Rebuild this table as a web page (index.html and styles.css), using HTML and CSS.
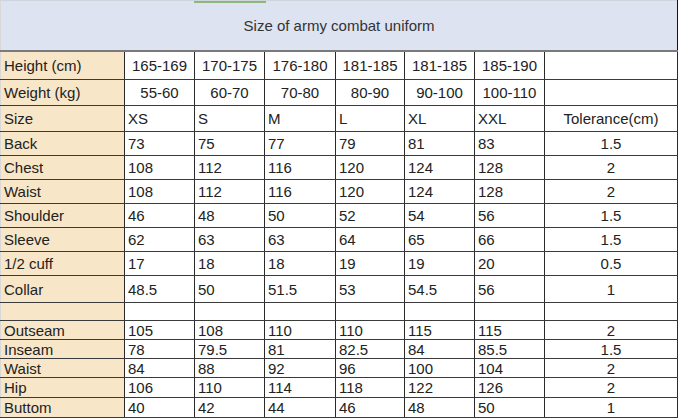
FILE: index.html
```html
<!DOCTYPE html>
<html>
<head>
<meta charset="utf-8">
<link rel="stylesheet" href="styles.css">
</head>
<body>
<table class="chart">
  <colgroup>
    <col class="c-label">
    <col class="c-70">
    <col class="c-70">
    <col class="c-71">
    <col class="c-69">
    <col class="c-70">
    <col class="c-70">
    <col class="c-tol">
  </colgroup>
  <tr class="r-title">
    <td colspan="8" class="title"><span class="tab-mark"></span>Size of army combat uniform</td>
  </tr>
  <tr class="r-28 center">
    <td class="label">Height (cm)</td><td>165-169</td><td>170-175</td><td>176-180</td><td>181-185</td><td>181-185</td><td>185-190</td><td></td>
  </tr>
  <tr class="r-26 center">
    <td class="label">Weight (kg)</td><td>55-60</td><td>60-70</td><td>70-80</td><td>80-90</td><td>90-100</td><td>100-110</td><td></td>
  </tr>
  <tr class="r-26">
    <td class="label">Size</td><td>XS</td><td>S</td><td>M</td><td>L</td><td>XL</td><td>XXL</td><td class="tol">Tolerance(cm)</td>
  </tr>
  <tr class="r-24">
    <td class="label">Back</td><td>73</td><td>75</td><td>77</td><td>79</td><td>81</td><td>83</td><td class="tol">1.5</td>
  </tr>
  <tr class="r-24">
    <td class="label">Chest</td><td>108</td><td>112</td><td>116</td><td>120</td><td>124</td><td>128</td><td class="tol">2</td>
  </tr>
  <tr class="r-24">
    <td class="label">Waist</td><td>108</td><td>112</td><td>116</td><td>120</td><td>124</td><td>128</td><td class="tol">2</td>
  </tr>
  <tr class="r-24">
    <td class="label">Shoulder</td><td>46</td><td>48</td><td>50</td><td>52</td><td>54</td><td>56</td><td class="tol">1.5</td>
  </tr>
  <tr class="r-24">
    <td class="label">Sleeve</td><td>62</td><td>63</td><td>63</td><td>64</td><td>65</td><td>66</td><td class="tol">1.5</td>
  </tr>
  <tr class="r-24">
    <td class="label">1/2 cuff</td><td>17</td><td>18</td><td>18</td><td>19</td><td>19</td><td>20</td><td class="tol">0.5</td>
  </tr>
  <tr class="r-27">
    <td class="label">Collar</td><td>48.5</td><td>50</td><td>51.5</td><td>53</td><td>54.5</td><td>56</td><td class="tol">1</td>
  </tr>
  <tr class="r-18">
    <td class="label"></td><td></td><td></td><td></td><td></td><td></td><td></td><td></td>
  </tr>
  <tr class="r-19">
    <td class="label">Outseam</td><td>105</td><td>108</td><td>110</td><td>110</td><td>115</td><td>115</td><td class="tol">2</td>
  </tr>
  <tr class="r-19">
    <td class="label">Inseam</td><td>78</td><td>79.5</td><td>81</td><td>82.5</td><td>84</td><td>85.5</td><td class="tol">1.5</td>
  </tr>
  <tr class="r-19">
    <td class="label">Waist</td><td>84</td><td>88</td><td>92</td><td>96</td><td>100</td><td>104</td><td class="tol">2</td>
  </tr>
  <tr class="r-20">
    <td class="label">Hip</td><td>106</td><td>110</td><td>114</td><td>118</td><td>122</td><td>126</td><td class="tol">2</td>
  </tr>
  <tr class="r-20">
    <td class="label">Buttom</td><td>40</td><td>42</td><td>44</td><td>46</td><td>48</td><td>50</td><td class="tol">1</td>
  </tr>
</table>
</body>
</html>
```

FILE: styles.css
```css
html, body {
  margin: 0;
  padding: 0;
  background: #ffffff;
}

body {
  font-family: "Liberation Sans", Arial, sans-serif;
  font-size: 15px;
  color: #222222;
}

.chart {
  table-layout: fixed;
  border-collapse: collapse;
  width: 677px;
  border-left: 1px solid #d8d8d8;
  border-right: 1px solid #111111;
}

.c-label { width: 124px; }
.c-70 { width: 70px; }
.c-71 { width: 71px; }
.c-69 { width: 69px; }
.c-tol { width: 133px; }

.chart td {
  border-left: 1px solid #2a2a2a;
  border-right: 1px solid #2a2a2a;
  border-top: 1px solid #3a3a3a;
  border-bottom: 1px solid #3a3a3a;
  padding: 0 0 0 3px;
  line-height: 17px;
  vertical-align: middle;
  white-space: nowrap;
  overflow: hidden;
}

.chart td.label {
  background: #f8e6c8;
  border-left: 1px solid #d8d8d8;
}

.chart td.tol {
  text-align: center;
  padding-left: 0;
}

.center td {
  text-align: center;
  padding-left: 0;
}

.center td.label {
  text-align: left;
  padding-left: 3px;
}

.r-title td.title {
  position: relative;
  height: 49px;
  background: #dde3f1;
  text-align: center;
  color: #333333;
  padding: 0;
  border-top: 1px solid #d0d4dc;
  border-left: 1px solid #d8d8d8;
  border-right: 1px solid #111111;
  border-bottom: 2px solid #7a7a7a;
}

.tab-mark {
  position: absolute;
  left: 193px;
  top: 0;
  width: 72px;
  height: 2px;
  background: #8db87b;
}

.r-28 td { height: 27px; }
.r-26 td { height: 25px; }
.r-24 td { height: 23px; }
.r-27 td { height: 26px; }
.r-18 td { height: 17px; }
.r-19 td { height: 18px; }
.r-20 td { height: 19px; }
```
